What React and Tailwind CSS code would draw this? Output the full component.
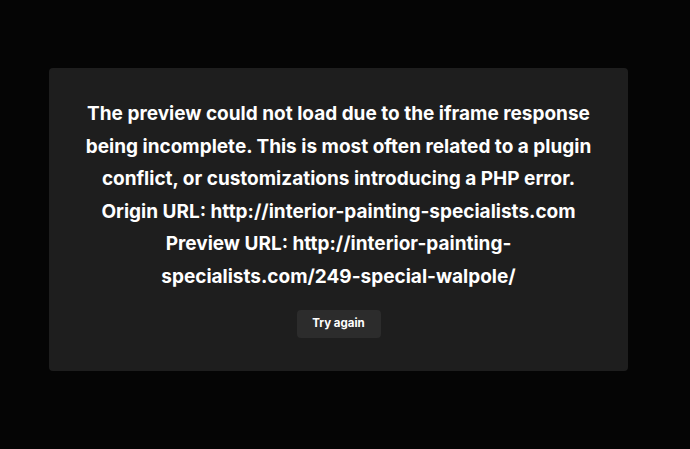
export default function App() {
  const lines = [
    "The preview could not load due to the iframe response",
    "being incomplete. This is most often related to a plugin",
    "conflict, or customizations introducing a PHP error.",
    "Origin URL: http://interior-painting-specialists.com",
    "Preview URL: http://interior-painting-",
    "specialists.com/249-special-walpole/",
  ];
  return (
    <div
      className="w-[690px] h-[449px] bg-[#050505] overflow-hidden pt-[68px] pl-[49px]"
      style={{ fontFamily: "'Inter', 'Noto Sans', sans-serif" }}
    >
      <div className="w-[579px] h-[303px] rounded-[4px] bg-[#1e1e1e] flex flex-col items-center pt-[30px]">
        <p className="text-white text-[19px] font-bold leading-[32.5px] text-center">
          {lines.map((l) => (
            <span key={l} className="block whitespace-nowrap">
              {l}
            </span>
          ))}
        </p>
        <button className="mt-[17px] h-[28px] w-[84px] rounded-[4px] bg-[#2c2c2c] text-white text-[11.5px] font-bold">
          Try again
        </button>
      </div>
    </div>
  );
}
